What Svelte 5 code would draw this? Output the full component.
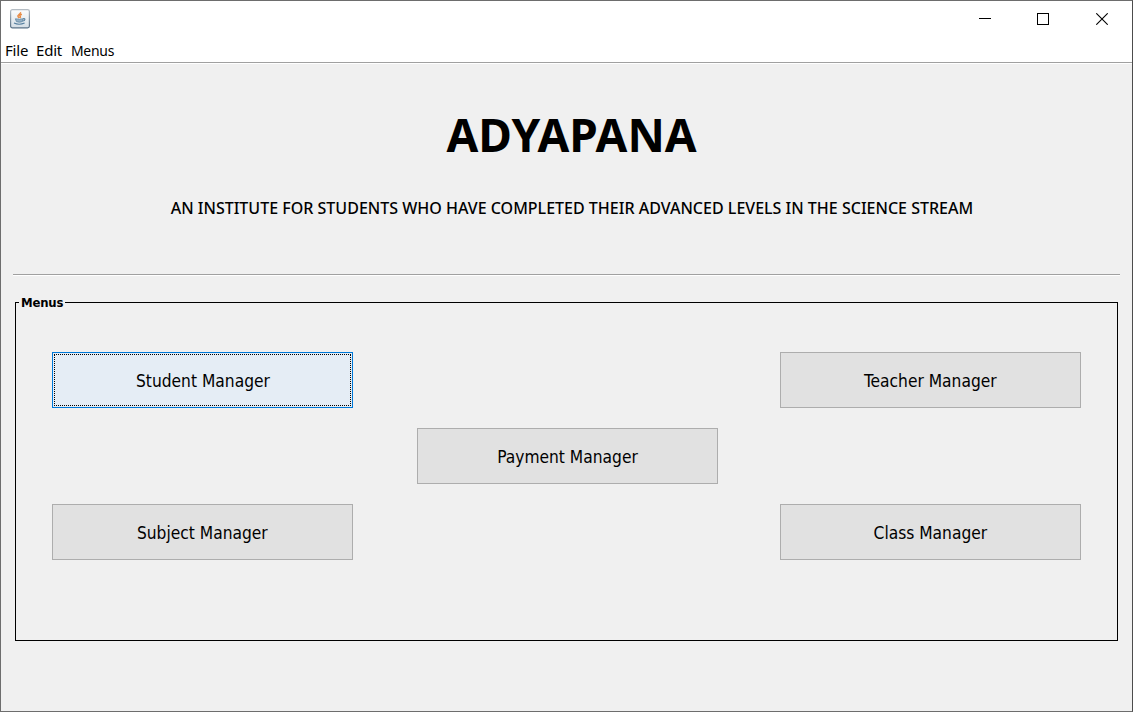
<script>
  const menus = ['File', 'Edit', 'Menus'];
  const managers = [
    { name: 'Student', area: 'student' },
    { name: 'Teacher', area: 'teacher' },
    { name: 'Payment', area: 'payment' },
    { name: 'Subject', area: 'subject' },
    { name: 'Class', area: 'class' }
  ];
  let focused = $state('Student');
</script>

<div class="window">
  <header class="titlebar">
    <svg class="java" width="20" height="20" viewBox="0 0 20 20">
      <defs>
        <linearGradient id="tile" x1="0" y1="0" x2="0" y2="1">
          <stop offset="0" stop-color="#fbfcfd" />
          <stop offset=".5" stop-color="#e9eef2" />
          <stop offset="1" stop-color="#d3dde5" />
        </linearGradient>
        <linearGradient id="edge" x1="0" y1="0" x2="0" y2="1">
          <stop offset="0" stop-color="#b4bcc3" />
          <stop offset="1" stop-color="#587086" />
        </linearGradient>
      </defs>
      <rect x=".6" y=".6" width="18.8" height="18.2" rx="1.8" fill="url(#tile)" stroke="url(#edge)" stroke-width="1.2" />
      <path d="M10.5 3.2C11.4 5 6.8 5.7 8 7.6L9.2 9M11.9 5.3C9.5 6 9.3 6.7 10.3 7.5Q10.8 8.2 9.8 9" fill="none" stroke="#e98b45" stroke-width="1.5" />
      <path d="M5.4 9.8Q9.5 10.8 13.1 9.8L12.4 12.6Q9.5 13.8 6.4 12.6Z" fill="#94afc3" stroke="#668ba8" stroke-width=".9" />
      <path d="M13.1 9.7C15.8 9.2 15.2 11.8 12.8 12M4 14.1Q9 16.4 14.6 14.1" fill="none" stroke="#557e9e" stroke-width="1.1" />
    </svg>
    <div class="controls">
      <svg width="12" height="12" shape-rendering="crispEdges"><path d="M0 5.5H12" stroke="#000" /></svg>
      <svg width="12" height="12" shape-rendering="crispEdges"><rect x=".5" y=".5" width="11" height="11" fill="none" stroke="#000" /></svg>
      <svg width="12" height="12"><path d="M.3 .3L11.7 11.7M11.7 .3L.3 11.7" stroke="#000" stroke-width="1.1" /></svg>
    </div>
  </header>
  <nav class="menubar">
    {#each menus as menu}<span class={menu.toLowerCase()}>{menu}</span>{/each}
  </nav>
  <main>
    <h1>ADYAPANA</h1>
    <p><span>AN INSTITUTE FOR STUDENTS WHO HAVE COMPLETED THEIR ADVANCED LEVELS IN THE SCIENCE STREAM</span></p>
    <div class="separator"></div>
    <section class="panel">
      <div class="caption"><i></i><b>Menus</b><i></i></div>
      <div class="grid">
        {#each managers as m}
          <button class={m.area} class:focused={focused === m.name} onclick={() => (focused = m.name)}>
            <span>{m.name} Manager</span>
          </button>
        {/each}
      </div>
    </section>
  </main>
</div>

<style>
  :global(body) { margin: 0; }
  .window {
    box-sizing: border-box;
    width: 1133px;
    height: 712px;
    border: 1px solid #6d6d6d;
    border-right-color: #4c4c4c;
    background: #f0f0f0;
    color: #000;
    display: flex;
    flex-direction: column;
    overflow: hidden;
  }
  .titlebar {
    height: 37px;
    flex: none;
    display: flex;
    justify-content: space-between;
    background: #fff;
  }
  .java { margin: 8px 0 0 9px; }
  .controls { display: flex; gap: 46px; padding: 12px 24px 0 0; }
  svg { display: block; }
  .controls svg:last-child { margin-left: 1px; }
  .menubar {
    height: 24px;
    flex: none;
    display: flex;
    padding-left: 4px;
    background: #fff;
    border-bottom: 1px solid #a0a0a0;
    font: 15px/24px "Noto Sans", sans-serif;
    white-space: nowrap;
  }
  .file { width: 31px; letter-spacing: -.2px; }
  .edit { width: 35px; letter-spacing: -.2px; }
  .menus { letter-spacing: -.3px; transform: scaleX(.93); transform-origin: left; }
  main { flex: 1; border-top: 1px solid #fff; }
  h1 {
    margin: 38px 0 0 10px;
    height: 65px;
    text-align: center;
    font: bold 46px/64px "Noto Sans", sans-serif;
  }
  p {
    margin: 28px 0 0 11px;
    height: 26px;
    text-align: center;
    font: 500 17px/26px "Noto Sans", sans-serif;
    white-space: nowrap;
  }
  p span { display: inline-block; transform: scaleX(.942); }
  .separator {
    height: 1px;
    margin: 53px 12px 0;
    background: #a0a0a0;
    border-bottom: 1px solid #fff;
  }
  .panel {
    box-sizing: border-box;
    margin: 26px 14px 0;
    width: 1103px;
    height: 339px;
    border: 1px solid #000;
    border-top: 0;
  }
  .caption { display: flex; height: 16px; margin: 0 -1px; }
  .caption i { height: 1px; background: #000; flex: 1; }
  .caption i:first-child { flex: none; width: 4px; }
  .caption b {
    width: 46px;
    margin-top: -8px;
    padding-left: 2px;
    box-sizing: border-box;
    font: bold 13px/17px "DejaVu Sans Condensed", "DejaVu Sans", sans-serif;
    font-stretch: condensed;
    letter-spacing: -.2px;
    white-space: nowrap;
  }
  .grid {
    display: grid;
    grid-template-columns: 301px 64px 301px 62px 301px;
    grid-template-rows: repeat(3, 56px);
    grid-template-areas: "student . . . teacher" ". . payment . ." "subject . . . class";
    row-gap: 20px;
    padding: 34px 36px 0;
  }
  .student { grid-area: student; }
  .teacher { grid-area: teacher; }
  .payment { grid-area: payment; }
  .subject { grid-area: subject; }
  .class { grid-area: class; }
  button {
    position: relative;
    box-sizing: border-box;
    padding: 2px 0 0;
    border: 1px solid #adadad;
    background: #e1e1e1;
    color: #000;
    outline: 0;
    font: 18px/24px "DejaVu Sans Condensed", "DejaVu Sans", sans-serif;
    font-stretch: condensed;
  }
  button span { display: inline-block; transform: scaleX(.957); }
  .focused { border-color: #0078d7; background: #e5edf5; }
  .focused::after {
    content: "";
    position: absolute;
    inset: 1px;
    border: 1px dotted #000;
  }
</style>
